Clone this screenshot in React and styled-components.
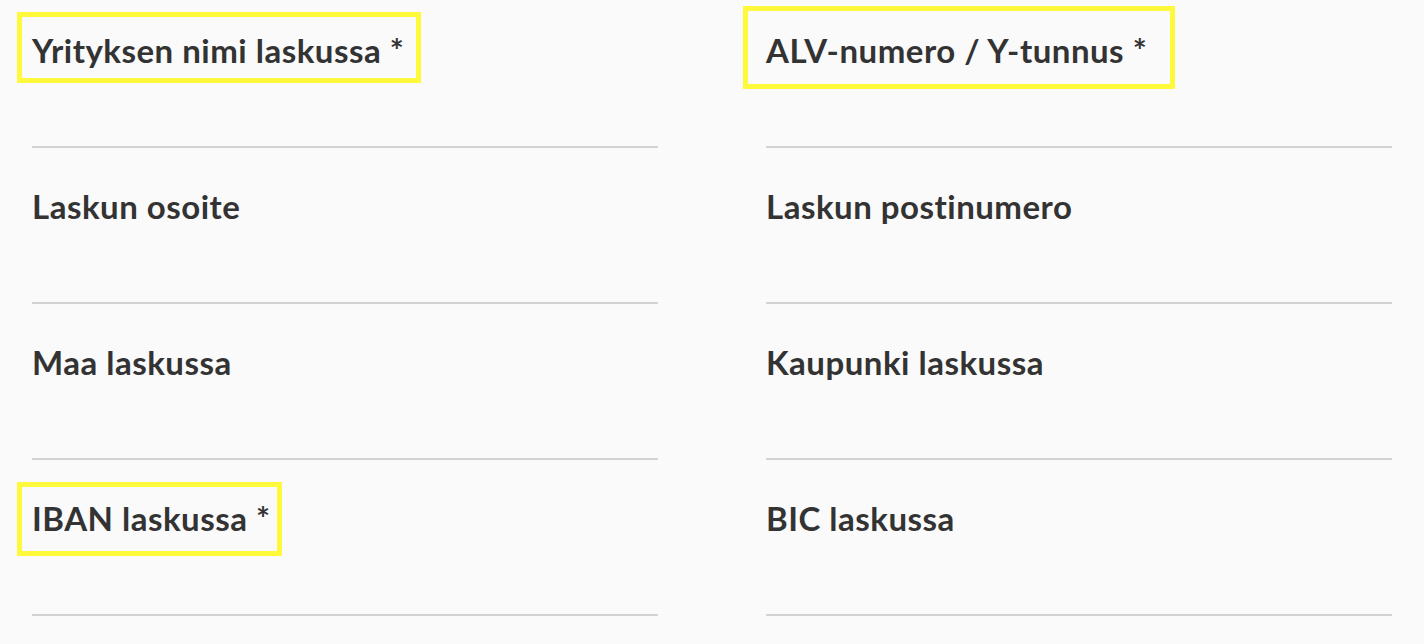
import React from "react";
import styled, { createGlobalStyle } from "styled-components";

const GlobalStyle = createGlobalStyle`
    html, body {
        margin: 0;
        padding: 0;
        background: #fafafa;
    }
    body {
        font-family: Lato, "Open Sans", sans-serif;
        color: #333333;
        overflow: hidden;
    }
`;

// 2 columns of invoice fields
const StyledForm = styled.form`
    display: grid;
    grid-template-columns: 1fr 1fr;
    column-gap: 108px;
    padding: 0 32px;
    margin-top: -8px;
`;

const StyledField = styled.div`
    display: flex;
    flex-direction: column;
    height: 156px;
    padding-top: 38px;
    box-sizing: border-box;
`;

const StyledLabelRow = styled.div`
    height: 40px;
`;

const StyledLabel = styled.label`
    position: relative;
    display: inline-block;
    font-size: 33px;
    font-weight: 700;
    line-height: 40px;
    color: #333333;
    letter-spacing: 0.5px;

    /* yellow annotation box around required fields */
    &::after {
        content: "";
        display: ${(p) => (p.$mark ? "block" : "none")};
        position: absolute;
        top: ${(p) => (p.$mark ? p.$mark[0] : 0)}px;
        right: ${(p) => (p.$mark ? p.$mark[1] : 0)}px;
        bottom: ${(p) => (p.$mark ? p.$mark[2] : 0)}px;
        left: ${(p) => (p.$mark ? p.$mark[3] : 0)}px;
        border: 5px solid #fff93b;
        pointer-events: none;
    }
`;

const StyledInput = styled.input`
    flex: 1;
    width: 100%;
    box-sizing: border-box;
    border: none;
    border-bottom: 2px solid #d2d2d2;
    background: transparent;
    outline: none;
    font-family: inherit;
    font-size: 24px;
    color: #333333;
`;

const fields = [
    { label: "Yrityksen nimi laskussa *", mark: [-18, -17, -13, -15] },
    { label: "ALV-numero / Y-tunnus *", mark: [-24, -28, -19, -23] },
    { label: "Laskun osoite" },
    { label: "Laskun postinumero" },
    { label: "Maa laskussa" },
    { label: "Kaupunki laskussa" },
    { label: "IBAN laskussa *", mark: [-16, -11, -18, -15] },
    { label: "BIC laskussa" },
];

const App = () => {
    return <>
        <GlobalStyle />
        <StyledForm onSubmit={(e) => e.preventDefault()}>
            {fields.map((f, i) => (
                <StyledField key={i}>
                    <StyledLabelRow>
                        <StyledLabel htmlFor={`field-${i}`} $mark={f.mark}>{f.label}</StyledLabel>
                    </StyledLabelRow>
                    <StyledInput id={`field-${i}`} type="text" />
                </StyledField>
            ))}
        </StyledForm>
    </>
}

export default App
